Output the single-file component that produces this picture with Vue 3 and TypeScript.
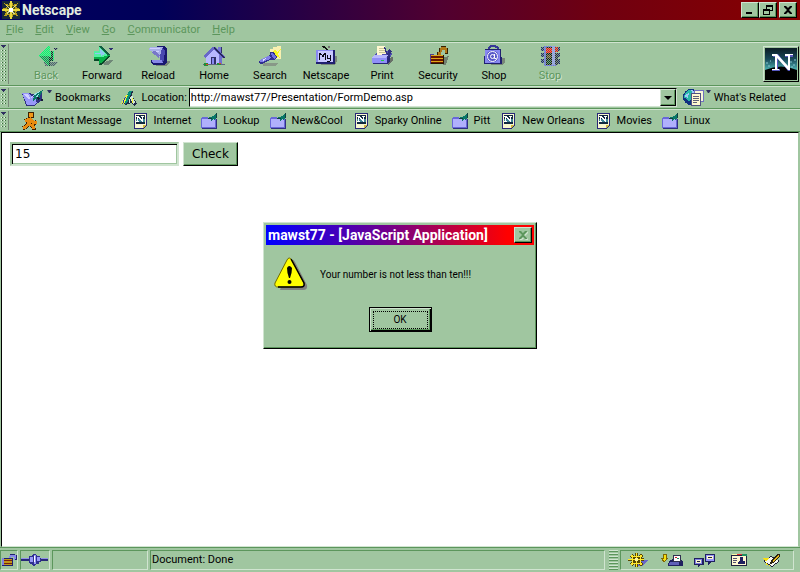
<script setup lang="ts">
import { ref } from 'vue'

interface Item {
  label: string
  icon: string
  disabled?: boolean
}

const menus: string[] = ['File', 'Edit', 'View', 'Go', 'Communicator', 'Help']

const tools: Item[] = [
  { label: 'Back', icon: 'back', disabled: true },
  { label: 'Forward', icon: 'forward' },
  { label: 'Reload', icon: 'reload' },
  { label: 'Home', icon: 'home' },
  { label: 'Search', icon: 'search' },
  { label: 'Netscape', icon: 'my' },
  { label: 'Print', icon: 'print' },
  { label: 'Security', icon: 'security' },
  { label: 'Shop', icon: 'shop' },
  { label: 'Stop', icon: 'stop', disabled: true },
]

const links: Item[] = [
  { label: 'Instant Message', icon: 'aim' },
  { label: 'Internet', icon: 'note' },
  { label: 'Lookup', icon: 'folder' },
  { label: 'New&Cool', icon: 'folder' },
  { label: 'Sparky Online', icon: 'note' },
  { label: 'Pitt', icon: 'folder' },
  { label: 'New Orleans', icon: 'note' },
  { label: 'Movies', icon: 'note' },
  { label: 'Linux', icon: 'folder' },
]

const components: Item[] = [
  { label: 'Navigator', icon: 'wheel' },
  { label: 'Inbox', icon: 'inbox' },
  { label: 'Newsgroups', icon: 'news' },
  { label: 'Address Book', icon: 'card' },
  { label: 'Composer', icon: 'compose' },
]

const address = ref('http://mawst77/Presentation/FormDemo.asp')
const amount = ref('15')
const alertOpen = ref(true)
</script>

<template>
  <div class="browser">
    <svg class="sprite" aria-hidden="true">
      <defs>
        <linearGradient id="sky" x1="0" y1="0" x2="0" y2="1">
          <stop offset="0" stop-color="#0c1c24" /><stop offset="0.35" stop-color="#184858" /><stop offset="0.65" stop-color="#48a8a8" />
        </linearGradient>
      </defs>

      <symbol id="i-back" viewBox="0 0 24 22">
        <path d="M10 17h14l-3 4H11z" fill="#506070" />
        <path d="M5 11 14 1h2v5h4v10h-4v5h-2z" fill="#00ff70" />
        <path d="M5 11h10v9h-1z" fill="#00a050" />
        <path d="M17 6h2v10h-3v5h-1v-9h2z" fill="#003828" />
        <path d="M19 3h5l-2 3z" fill="#202050" />
      </symbol>
      <symbol id="i-forward" viewBox="0 0 24 22">
        <path d="M9 19l11-4h3l-4 5z" fill="#708878" />
        <path d="M4 6h5V1h2l9 9v2l-9 8H9v-5H4z" fill="#08b048" />
        <path d="M4 6h5V2l2 1 7 7-5 2H4z" fill="#50f0a0" />
        <path d="M5 8h7v1H5zM10 4l5 5-4 2z" fill="#90c8f0" />
        <path d="M4 14h5v5l2-1 8-7h1v1l-9 8H9v-4H4z" fill="#084828" />
        <path d="M9 1h2l9 9h-2l-8-7z" fill="#106040" />
        <path d="M18 3h5l-2 3z" fill="#303070" />
      </symbol>
      <symbol id="i-reload" viewBox="0 0 24 22">
        <path d="M9 16h15v2l-4 3H10z" fill="#788878" />
        <path d="M11 1h8l2 3v14l-3 2H7l-2-2v-3h8l3-3V7z" fill="#181870" />
        <path d="M12 3h5l2 3-1 9-2 2-2-2V7z" fill="#4848b0" />
        <path d="M6 15h10l1 3H7z" fill="#8888e8" />
        <path d="M2 4 5 2h12l-2 4-1 6z" fill="#a8b0e8" />
        <path d="M4 3h10v1H4zM7 6h6v1H7z" fill="#d0d0ff" /><path d="M5 7l8 6 1-3-5-4z" fill="#7878c8" />
      </symbol>
      <symbol id="i-home" viewBox="0 0 24 22">
        <path d="M16 2h4v9h-4z" fill="#7878d8" /><path d="M19 2h1v9h-1z" fill="#303068" />
        <path d="M4 10 12 3l8 7v9H4z" fill="#b8b8ff" />
        <path d="M17 9h3v10h-3z" fill="#7070d0" />
        <path d="M1 11 11 2h2l10 10-2 1-9-8-9 8z" fill="#6868c8" />
        <path d="M12 2l11 10-1 1L12 4z" fill="#282858" />
        <path d="M9 12h5v8H9z" fill="#303068" /><path d="M10 13h2v7h-2z" fill="#8888f0" />
        <path d="M1 19h22v1H1z" fill="#606880" />
        <path d="M2 18h4v3H2zM15 18h4v2h-4z" fill="#209038" /><path d="M4 19h2v1H4zM17 18h2v1h-2z" fill="#f04020" />
      </symbol>
      <symbol id="i-search" viewBox="0 0 24 22">
        <path d="M12 4h3V2h4V1h4v13h-6l-5-5z" fill="#f8f0b0" /><path d="M14 7l3-3 2 3 4-3-3 5 2 4-5-2z" fill="#f8f820" />
        <path d="M5 18h16l-4 3H5z" fill="#889888" />
        <path d="M1 16 12 10V7h4l3 5-2 3h-5L4 19H2z" fill="#303090" />
        <path d="M2 15l8-4 3 1-1 2-7 3H2z" fill="#8080e8" />
        <path d="M13 8h2l3 4-1 2-3-2z" fill="#7070e0" /><path d="M5 14l3-1v1l-3 2z" fill="#e0e0ff" />
      </symbol>
      <symbol id="i-my" viewBox="0 0 24 22">
        <path d="M8 1h2l4 3v2h-2V4L8 2z" fill="#101010" /><path d="M14 1h2v2h-2z" fill="#707070" />
        <path d="M20 11h3v5l-2 4H6z" fill="#788878" />
        <path d="M2 5h19v14H2z" fill="#202070" /><path d="M2 5h17v12H2z" fill="#8888f0" /><path d="M4 6h15v11H4z" fill="#c8c8ff" />
        <path d="M5 8h2v1h1v1h1V9h1V8h2v7h-1v-5h-1v2H8v-2H6v5H5zM13 10h1v3h2v-3h1v6h-1v1h-3v-1h3v-2h-3z" fill="#080818" />
      </symbol>
      <symbol id="i-print" viewBox="0 0 24 22">
        <path d="M18 13l5-1v4l-5 4z" fill="#687068" />
        <path d="M3 12 6 8l14-2 2 3-4 7-15 1z" fill="#5050b0" />
        <path d="M7 10V1h8l2 8z" fill="#fff8d0" /><path d="M9 3h6v1H9zM9 5h7v1H9zM9 7h7v1H9z" fill="#c8c898" />
        <path d="M14 2h1l3 7h-2zM19 4l3 2-4 8-2-1z" fill="#303080" />
        <path d="M2 12h15v6H2z" fill="#9090f8" /><path d="M2 12l3-2h13l-2 3H2z" fill="#b8b8ff" />
        <path d="M2 18h15v-5l3-3v6l-3 3H4z" fill="#282878" /><path d="M11 15h3v1h-3z" fill="#20d040" />
      </symbol>
      <symbol id="i-security" viewBox="0 0 24 22">
        <path d="M18 12l5-1-3 9h-3z" fill="#708070" />
        <path d="M11 10V7h2V3h2V2h5v1h2v5h-3V5h-3v2h-1v3z" fill="#b07818" />
        <path d="M11 7h1v3h-1zM13 3h1v4h-1zM15 1h5v1h-5zM21 3h1v5h-1zM19 8h3v1h-3z" fill="#382000" />
        <path d="M4 10h14v9H4z" fill="#281800" /><path d="M5 10h12v8H5z" fill="#681800" />
        <path d="M5 10h12v1H5zM5 13h12v1H5zM5 16h12v1H5z" fill="#e0a818" /><path d="M4 9h4v1H4zM4 10h1v9H4z" fill="#504090" />
      </symbol>
      <symbol id="i-shop" viewBox="0 0 24 22">
        <path d="M20 13h3v4l-3 3H8z" fill="#788878" />
        <path d="M7 7V3l2-2h4l3 2v4" fill="none" stroke="#383898" stroke-width="2" />
        <path d="M3 4h16l1 15H2z" fill="#202070" /><path d="M3 5h15v13H3z" fill="#8888f0" />
        <g shape-rendering="auto"><circle cx="10.500" cy="11.500" r="6" fill="#5858c8" /><circle cx="10.500" cy="11.500" r="5" fill="none" stroke="#fff" /><circle cx="10.500" cy="11.500" r="2" fill="none" stroke="#fff" /><path d="M12.500 9v4.500h2" fill="none" stroke="#fff" /></g>
      </symbol>
      <symbol id="i-stop" viewBox="0 0 24 22">
        <path d="M3 2h4v4H3zM3 8h4v4H3zM3 14h4v4H3zM16 2h6v4h-6zM16 8h6v4h-6zM16 14h6v5h-6z" fill="#202868" />
        <path d="M6 1h12v20H6z" fill="#6868f0" /><path d="M8 2h6v18H8z" fill="#181818" /><path d="M14 1h3v19h-3z" fill="#9898ff" />
        <path d="M8 3h6v5H8z" fill="#ff0808" /><path d="M9 10h4v3H9z" fill="#604020" /><path d="M9 15h4v4H9z" fill="#104028" />
        <path d="M17 2h3v5h-3z" fill="#e01010" /><path d="M17 8h3v12h-3z" fill="#282840" />
      </symbol>

      <symbol id="i-aim" viewBox="0 0 16 18">
        <g fill="none" stroke="#402000" stroke-width="4"><path d="M9 7 7 12l4 2 1 4M7 11l-3 4-3 1M3 9l5-2 4 4 3-1" /></g>
        <circle cx="9" cy="3" r="3" fill="#f09818" stroke="#402000" />
        <g fill="none" stroke="#e88c10" stroke-width="3"><path d="M9 6 7 12l4 2 1 3M7 11l-3 4-3 1M3 9l5-2 4 4 3-1" /></g>
      </symbol>
      <symbol id="i-note" viewBox="0 0 16 16">
        <path d="M2 0h13v12l-4 4H2z" fill="#282878" /><path d="M3 1h11v11l-3 3H3z" fill="#f8f8d0" />
        <path d="M4 2h9v9H4z" fill="#102840" /><path d="M4 6h9v3H4z" fill="#408898" />
        <path d="M4 3h3v1h1v1h1v1h1V4H9V3h3v1h-1v5h-1V8H9V7H8V6H7V5H6v3h1v1H4V8h1V4H4z" fill="#fff" /><path d="M11 12h3l-3 3z" fill="#d0b840" />
      </symbol>
      <symbol id="i-folder" viewBox="0 0 16 16">
        <path d="M1 6h15v10H1z" fill="#303080" /><path d="M0 5h1V4h6v1h8v10H0z" fill="#6868d8" /><path d="M1 6h13v8H1z" fill="#b0b0fc" />
        <path d="M7 5l5-2 3-3v4l-1 4-2-2-2 2V6z" fill="#087868" /><path d="M15 0h1v5h-1zM7 5h4v1H7z" fill="#104040" />
      </symbol>
      <symbol id="i-bookmark" viewBox="0 0 24 16">
        <path d="M0 3h7l4 1 9-1v7l-8 6H4z" fill="#303080" /><path d="M0 3h7l2 3 4 1 2 6-3 2H5z" fill="#9898f8" />
        <path d="M1 4h5l2 4 3-2v1L7 9z" fill="#d0d0ff" />
        <path d="M12 5l9-5-5 11-2-3-3 3z" fill="#087868" /><path d="M12 4l6-3v1l-7 4zM14 6l3-2-2 4z" fill="#a0e0e8" /><path d="M15 7l3 1-2 3zM19 9h2v2h-2z" fill="#181838" />
      </symbol>
      <symbol id="i-quill" viewBox="0 0 16 16">
        <path d="M1 13 8 1h4l-1 4 5 9-3 2-3-3-5 2z" fill="#202848" />
        <path d="M8 1h3L7 11l-3 3-1-2z" fill="#089078" /><path d="M5 5h2L3 14H0z" fill="#f8f830" /><path d="M4 7h1L2 14H1z" fill="#2838b0" />
        <path d="M11 5l3 7-2 2-3-6zM8 9h1v4H8z" fill="#d0e8d8" /><path d="M11 8h1v5h-1z" fill="#f8f830" />
      </symbol>
      <symbol id="i-related" viewBox="0 0 22 18">
        <circle cx="8" cy="8" r="8" fill="#103080" /><path d="M2 4l4-3 4 1-2 4 2 2-4 5-2-3-3-1z" fill="#28b8a8" />
        <path d="M1 7l5-3-1 5zM8 1l3 1-1 4z" fill="#a0c8f8" />
        <path d="M11 1h10v12H11z" fill="#7070c0" /><path d="M12 2h8v10h-8z" fill="#f8f8d8" />
        <path d="M8 4h10v13H8z" fill="#505080" /><path d="M9 5h8v11H9z" fill="#fff8d0" /><path d="M10 7h6v1h-6zM10 9h6v1h-6zM10 11h6v1h-6zM10 13h4v1h-4z" fill="#606078" />
      </symbol>

      <symbol id="i-compass" viewBox="0 0 18 18">
        <path d="M0 0h18v18H0z" fill="#182838" />
        <path d="M0 8l5-2-3-4 5 2 1-4h2l1 4 5-2-2 4 4 2-4 3 2 4-5-1-1 4H8l-1-4-5 1 2-4-4-2z" fill="#b8a018" />
        <path d="M5 5h8v8H5z" fill="#485020" /><path d="M8 0h2v18H8zM0 8h18v2H0z" fill="#e8d840" />
        <path d="M4 4l2 1 7 8-2 0zM14 4l-1 2-8 7v-2z" fill="#d8d890" /><path d="M7 7h4v4H7z" fill="#fff" />
      </symbol>
      <symbol id="i-lock" viewBox="0 0 16 14">
        <path d="M8 5V3l2-2h3l2 2v4h-2V4h-3v2z" fill="#8888e8" /><path d="M15 2h1v5h-2V6h1zM9 1h5v1H9z" fill="#202070" /><path d="M1 5h11v8H1z" fill="#202070" />
        <path d="M3 6h8v6H3z" fill="#c09818" /><path d="M3 7h8v1H3zM3 10h8v1H3z" fill="#782010" /><path d="M1 5h2v7H1z" fill="#8080e0" />
      </symbol>
      <symbol id="i-plug" viewBox="0 0 28 14">
        <path d="M0 5h8v3H0zM19 5h8v3h-8z" fill="#282878" /><path d="M0 5h8v1H0zM19 5h8v1h-8z" fill="#9090e8" />
        <path d="M8 3h3l1-2h3l1 2h3v2h1v4h-2v2h-3l-1 2h-2l-1-2H9l-1-2z" fill="#303090" /><path d="M9 4h3v5H9zM13 2h2v9h-2zM16 4h3v4h-3z" fill="#9898f8" /><path d="M13 3h1v6h-1z" fill="#fff" />
      </symbol>
      <symbol id="i-wheel" viewBox="0 0 22 14">
        <path d="M12 7h9l-5 6h-5z" fill="#6868c8" />
        <path d="M8 0h3v3l3-2 2 2-2 2h3v3h-3l2 3-2 2-3-2v3H8v-3l-3 2-2-2 2-3H1V6h4L3 3l2-2 3 2z" fill="#584800" />
        <path d="M9 0h1v14H9zM1 6h16v1H1zM4 2h2v2H4zM13 2h2v2h-2zM4 10h2v2H4zM13 10h2v2h-2zM6 3h7v1H6zM5 4h1v6H5zM13 4h1v6h-1zM6 10h7v1H6z" fill="#ffe830" />
        <path d="M8 5h3v3H8z" fill="#fff8a0" />
      </symbol>
      <symbol id="i-inbox" viewBox="0 0 22 14">
        <path d="M2 1h3v4h2l-4 4-3-4h2z" fill="#f8e010" stroke="#806800" />
        <path d="M8 8l4-2h8l2 3v4H7z" fill="#202060" /><path d="M9 9h9v3H8z" fill="#6060b8" /><path d="M12 2h7v6h-7z" fill="#fff" stroke="#303050" />
        <path d="M14 4h2v1h-2z" fill="#d02020" /><path d="M16 5h2v1h-2z" fill="#209060" />
      </symbol>
      <symbol id="i-news" viewBox="0 0 22 14">
        <path d="M0 5h10v7H6l-2 2v-2H0z" fill="#202060" /><path d="M1 6h7v5H1z" fill="#8080e0" /><path d="M2 7h5v3H2z" fill="#f8f8d0" />
        <path d="M11 1h10v8h-4l-3 3V9h-3z" fill="#202060" /><path d="M12 2h8v6h-8z" fill="#9898f8" /><path d="M13 3h6v3h-6z" fill="#fff8d0" /><path d="M3 8h3v1H3zM14 4h4v1h-4z" fill="#202040" />
      </symbol>
      <symbol id="i-card" viewBox="0 0 22 14">
        <path d="M3 2h16v11H3z" fill="#202040" /><path d="M4 3h14v9H4z" fill="#fff8d0" />
        <path d="M4 1h5v1H4z" fill="#f8f8a0" /><path d="M9 1h5v1H9z" fill="#e83030" /><path d="M14 1h5v2h-5z" fill="#209060" />
        <path d="M5 5h4v1H5zM5 7h4v1H5zM5 9h3v1H5z" fill="#505070" /><path d="M12 4h3v4h2v3h-7V9l2-1z" fill="#202060" />
      </symbol>
      <symbol id="i-compose" viewBox="0 0 22 14">
        <path d="M2 8l8-5 9 5-8 6z" fill="#202038" /><path d="M3 8l7-4 8 4-7 5z" fill="#f8f8f0" />
        <path d="M16 1h3v2l-7 7-3 1 1-3z" fill="#282010" /><path d="M17 2h1v1l-6 6-1-1z" fill="#e8b818" /><path d="M1 5h7L5 8zM5 10l5 3-5-1z" fill="#f8e010" />
      </symbol>
    </svg>

    <header class="titlebar">
      <svg class="app-icon crisp"><use href="#i-compass" /></svg>
      <h1 class="title">Netscape</h1>
      <button class="win-btn" aria-label="Minimize"><svg viewBox="0 0 10 10"><path d="M1 7h6v2H1z" /></svg></button>
      <button class="win-btn" aria-label="Restore"><svg viewBox="0 0 10 10"><path d="M3 0h7v6H7v4H0V4h3zM4 2v2h3v1h2V2zM1 6v3h5V6z" fill-rule="evenodd" /></svg></button>
      <button class="win-btn close" aria-label="Close"><svg viewBox="0 0 10 10"><path d="M1 1h2l2 2 2-2h2v1L6 5l3 3v1H7L5 7 3 9H1V8l3-3-3-3z" /></svg></button>
    </header>

    <nav class="menubar" aria-label="Menu">
      <button v-for="m in menus" :key="m" class="menu"><u>{{ m[0] }}</u>{{ m.slice(1) }}</button>
    </nav>

    <div class="bar toolbar">
      <div class="grip"></div>
      <div class="tools">
        <button v-for="t in tools" :key="t.label" class="tool" :disabled="t.disabled">
          <svg class="tool-icon crisp"><use :href="`#i-${t.icon}`" /></svg>
          <span>{{ t.label }}</span>
        </button>
      </div>
      <a href="#" class="brand" aria-label="Netscape home">
        <svg viewBox="0 0 32 32"><path d="M0 0h32v32H0z" fill="url(#sky)" /><path d="M0 22q16-7 32 0v10H0z" fill="#000" />
          <path d="M1 15h2M5 13h1M3 18h2M25 14h2M28 17h2M26 19h2M29 12h2" stroke="#88c8d0" />
          <path d="M8 6h5l10 13V9h-3V7h8v2h-3v14h-2L13 10v11h2v2H7v-2h3V9H8z" fill="#5858c0" /><path d="M7 6h5l11 12V8h-3V6h8v1h-3v15h-2L12 10v11h2v1H7v-1h3V8H7z" fill="#fff" /></svg>
      </a>
    </div>

    <div class="bar location">
      <div class="grip"></div>
      <button class="bookmarks">
        <svg class="bm-icon crisp"><use href="#i-bookmark" /></svg>
        <svg class="caret" viewBox="0 0 5 3"><path d="M0 0h5L3 3H2z" /></svg>
        <span>Bookmarks</span>
      </button>
      <svg class="icon crisp"><use href="#i-quill" /></svg>
      <label for="address" class="address-label">Location:</label>
      <div class="combo">
        <input id="address" v-model="address" type="text" />
        <button class="drop" aria-label="Show history"><svg viewBox="0 0 8 4"><path d="M0 0h8L4 4z" /></svg></button>
      </div>
      <button class="related">
        <svg class="related-icon crisp"><use href="#i-related" /></svg>
        <svg class="caret" viewBox="0 0 5 3"><path d="M0 0h5L3 3H2z" /></svg>
        <span>What's Related</span>
      </button>
    </div>

    <nav class="bar personal" aria-label="Personal toolbar">
      <div class="grip"></div>
      <a v-for="l in links" :key="l.label" href="#" class="link" :class="l.icon">
        <svg class="icon crisp"><use :href="`#i-${l.icon}`" /></svg>
        <span>{{ l.label }}</span>
      </a>
    </nav>

    <main class="page">
      <form class="form" @submit.prevent="alertOpen = true">
        <input v-model="amount" class="amount" type="text" aria-label="Number" />
        <button class="check" type="submit">Check</button>
      </form>
    </main>

    <footer class="status">
      <div class="cell lock"><svg class="crisp"><use href="#i-lock" /></svg></div>
      <div class="cell plug"><svg class="crisp"><use href="#i-plug" /></svg></div>
      <div class="cell progress"></div>
      <div class="cell message">Document: Done</div>
      <div class="handle"></div>
      <div class="components">
        <button v-for="c in components" :key="c.label" :aria-label="c.label"><svg class="crisp"><use :href="`#i-${c.icon}`" /></svg></button>
      </div>
    </footer>

    <section v-if="alertOpen" class="dialog" role="alertdialog" aria-labelledby="alert-title" aria-describedby="alert-text">
      <header class="dialog-title">
        <h2 id="alert-title">mawst77 - [JavaScript Application]</h2>
        <button class="win-btn dim" aria-label="Close" disabled><svg viewBox="0 0 10 10"><path d="M1 1h2l2 2 2-2h2v1L6 5l3 3v1H7L5 7 3 9H1V8l3-3-3-3z" /></svg></button>
      </header>
      <div class="dialog-body">
        <svg class="warning" viewBox="0 0 34 34">
          <path d="M16 4q3-3 5 1l12 23q1 5-4 5H6z" fill="#808080" />
          <path d="M13 3q2-4 5 0l12 23q1 4-3 4H4q-4 0-3-4z" fill="#ff0" stroke="#706800" />
          <path d="M17 2 30 26q1 4-3 4H4" fill="none" stroke="#000" stroke-width="1.500" />
          <path d="M13 11q2-4 5 0 0 5-2 10h-1q-2-5-2-10z" /><circle cx="15.500" cy="25" r="2" />
        </svg>
        <p id="alert-text">Your number is not less than ten!!!</p>
      </div>
      <button class="ok" @click="alertOpen = false"><span>OK</span></button>
    </section>
  </div>
</template>

<style>
html,
body,
#app {
  height: 100%;
}
body {
  overflow: hidden;
}
</style>

<style scoped>
.browser {
  --face: #a0c6a0;
  --light: #d0e4d0;
  --dark: #5c965c;
  position: relative;
  display: flex;
  flex-direction: column;
  min-height: 100%;
  background: var(--face);
  color: #000;
  font: 11px/18px Roboto, 'Liberation Sans', sans-serif;
  white-space: nowrap;
}
*,
*::before {
  box-sizing: border-box;
}
button,
input {
  margin: 0;
  padding: 0;
  border: 0;
  border-radius: 0;
  background: none;
  color: inherit;
  font: inherit;
  outline: 0;
}
a {
  color: inherit;
  text-decoration: none;
}
h1,
h2,
p {
  margin: 0;
}
svg {
  display: block;
  flex: none;
}
.crisp {
  shape-rendering: crispEdges;
}
.sprite {
  position: absolute;
  width: 0;
  height: 0;
}
.titlebar {
  display: flex;
  align-items: center;
  height: 20px;
  padding: 0 3px 0 2px;
  background: linear-gradient(90deg, #000060, #000058 20%, #500030 55%, #700010 75%, #880000);
}
.app-icon {
  width: 18px;
  height: 18px;
}
.title {
  flex: 1;
  padding-left: 2px;
  color: #e0ece0;
  font-size: 14px;
  line-height: 20px;
}
.win-btn {
  display: grid;
  flex: none;
  place-items: center;
  width: 18px;
  height: 16px;
  background: var(--face);
  border: 1px solid;
  border-color: var(--light) #000 #000 var(--light);
  box-shadow: inset -1px -1px var(--dark);
}
.win-btn svg {
  width: 10px;
  height: 10px;
}
.win-btn.close {
  margin-left: 2px;
}
.menubar {
  display: flex;
  gap: 12px;
  height: 22px;
  padding: 0 6px;
  border-bottom: 1px solid var(--dark);
}
.menu {
  height: 20px;
  color: var(--dark);
}
.bar {
  display: flex;
  align-items: center;
  border-top: 1px solid var(--light);
  border-bottom: 1px solid var(--dark);
}
.grip {
  flex: none;
  align-self: stretch;
  width: 9px;
  margin: 1px 0;
  padding: 6px 2px 2px 1px;
  border-right: 1px solid #788878;
  background:
    linear-gradient(#303060, #303060) 1px 1px / 5px 1px no-repeat,
    linear-gradient(#303060, #303060) 2px 2px / 3px 1px no-repeat,
    linear-gradient(#303060, #303060) 3px 3px / 1px 1px no-repeat;
}
.grip::before {
  content: '';
  display: block;
  height: 100%;
  background: linear-gradient(90deg, #e8f4e8 1px, #386838 1px 2px, transparent 2px) 0 0 / 3px 3px;
  mask: linear-gradient(#000 1px, transparent 1px) 0 0 / 3px 3px;
}
.toolbar {
  height: 44px;
}
.tools {
  display: flex;
  flex: 1;
  padding-left: 9px;
}
.tool {
  display: flex;
  flex-direction: column;
  align-items: center;
  width: 56px;
  height: 40px;
}
.tool-icon {
  width: 24px;
  height: 22px;
  margin-top: 1px;
}
.tool:disabled {
  color: var(--dark);
  text-shadow: 1px 1px var(--light);
}
.tool:disabled .tool-icon {
  mask: conic-gradient(#000 25%, #0004 0 50%, #000 0 75%, #0004 0) 0 0 / 2px 2px;
}
.brand {
  width: 36px;
  height: 36px;
  margin-right: 1px;
  padding: 1px;
  border: 1px solid;
  border-color: var(--light) #000 #000 var(--light);
}
.brand svg {
  width: 32px;
  height: 32px;
}
.location {
  height: 23px;
}
.bookmarks,
.related {
  display: flex;
  align-items: center;
}
.bookmarks {
  margin: 0 10px 0 13px;
}
.bm-icon {
  width: 24px;
  height: 16px;
}
.caret {
  align-self: flex-start;
  width: 5px;
  height: 3px;
  margin: 1px 3px 0 1px;
  fill: #303060;
}
.icon {
  width: 16px;
  height: 16px;
}
.address-label {
  padding: 0 2px 0 5px;
}
.combo {
  display: flex;
  flex: 1;
  height: 19px;
  border: 1px solid;
  border-color: #000 var(--light) var(--light) #000;
  background: #fff;
}
.combo input {
  flex: 1;
  min-width: 0;
  padding-left: 1px;
}
.drop {
  display: grid;
  place-items: center;
  width: 16px;
  background: var(--face);
  border: 1px solid;
  border-color: var(--light) #000 #000 var(--light);
  box-shadow: inset -1px -1px var(--dark);
}
.drop svg {
  width: 8px;
  height: 4px;
}
.related {
  margin: 0 14px 0 6px;
}
.related-icon {
  width: 22px;
  height: 18px;
}
.personal {
  height: 23px;
}
.link {
  display: flex;
  align-items: center;
  gap: 6px;
  padding-left: 10px;
}
.link.aim {
  gap: 2px;
  padding-left: 13px;
}
.aim .icon {
  height: 18px;
}
.page {
  flex: 1;
  margin: 0 1px;
  padding: 9px 8px;
  border: 1px solid;
  border-color: #000 var(--face) var(--light) #000;
  background: #fff;
  font: 12px/16px 'DejaVu Sans', sans-serif;
}
.form {
  display: flex;
  align-items: center;
  gap: 4px;
}
.amount {
  width: 169px;
  height: 24px;
  padding-left: 3px;
  border: 2px solid;
  border-color: var(--face) var(--light) var(--light) var(--face);
  box-shadow: inset 1px 1px #000, inset -1px -1px var(--face);
}
.check {
  height: 24px;
  padding: 0 8px;
  background: var(--face);
  border: 1px solid;
  border-color: var(--light) #000 #000 var(--light);
  box-shadow: inset -1px -1px var(--dark);
}
.status {
  display: flex;
  gap: 2px;
  height: 25px;
  padding: 2px 6px 2px 0;
  border-top: 1px solid var(--dark);
}
.cell,
.components {
  display: flex;
  align-items: center;
  border: 1px solid;
  border-color: var(--dark) var(--light) var(--light) var(--dark);
}
.lock {
  width: 18px;
}
.lock svg {
  width: 16px;
  height: 14px;
}
.plug {
  width: 30px;
}
.plug svg {
  width: 28px;
  height: 14px;
}
.progress {
  width: 96px;
}
.message {
  flex: 1;
  padding-left: 1px;
}
.handle {
  width: 9px;
  margin-left: 2px;
  background: repeating-linear-gradient(var(--light) 0 1px, var(--dark) 1px 2px, var(--face) 2px 3px);
}
.components {
  justify-content: space-between;
  width: 174px;
  padding: 0 10px 0 6px;
}
.components svg {
  width: 22px;
  height: 14px;
}
.dialog {
  position: absolute;
  top: 222px;
  left: calc(50% - 137px);
  display: flex;
  flex-direction: column;
  width: 274px;
  padding: 2px 2px 16px;
  background: var(--face);
  border: 1px solid;
  border-color: var(--light) #000 #000 var(--light);
  box-shadow: inset -1px -1px var(--dark);
}
.dialog-title {
  display: flex;
  align-items: center;
  height: 20px;
  padding: 0 2px;
  background: linear-gradient(90deg, #00f, #70008c 45%, #f00 90%);
  color: #fff;
}
.dialog-title h2 {
  flex: 1;
  font-size: 14px;
  line-height: 20px;
}
.dim svg {
  fill: var(--dark);
  filter: drop-shadow(1px 1px var(--light));
}
.dialog-body {
  display: flex;
  gap: 12px;
  padding: 12px 8px 16px;
  font-size: 10px;
}
.warning {
  width: 34px;
  height: 34px;
}
.dialog-body p {
  padding-top: 9px;
}
.ok {
  align-self: center;
  width: 63px;
  height: 25px;
  padding: 3px;
  border: 1px solid #000;
  box-shadow: inset 1px 1px var(--light), inset -1px -1px #000, inset -2px -2px var(--dark);
  font-size: 10px;
  line-height: 16px;
}
.ok span {
  display: block;
  border: 1px dotted #000;
}
</style>
